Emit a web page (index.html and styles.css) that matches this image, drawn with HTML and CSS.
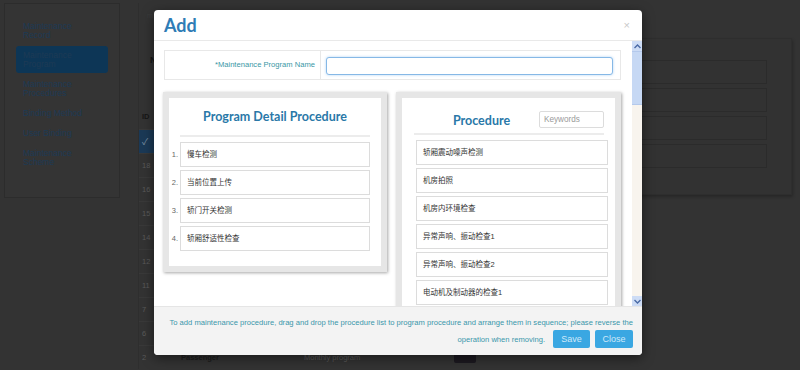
FILE: index.html
```html
<!DOCTYPE html>
<html lang="en">
<head>
<meta charset="UTF-8">
<title>Maintenance Program</title>
<link rel="stylesheet" href="styles.css">
</head>
<body>

<div class="page">

    <aside class="side">
        <div class="side-item">Maintenance<br>Record</div>
        <div class="side-item active">Maintenance<br>Program</div>
        <div class="side-item">Maintenance<br>Procedures</div>
        <div class="side-item">Binding Method</div>
        <div class="side-item">User Binding</div>
        <div class="side-item">Maintenance<br>Scheme</div>
    </aside>

    <main class="main">
        <div class="crumb">m</div>
        <div class="filter">N</div>
        <table class="grid">
            <tr class="head"><th>ID</th><th></th><th></th><th></th></tr>
            <tr class="checked"><td>&#10003;</td><td></td><td></td><td></td></tr>
            <tr><td>18</td><td></td><td></td><td></td></tr>
            <tr><td>16</td><td></td><td></td><td></td></tr>
            <tr><td>15</td><td></td><td></td><td></td></tr>
            <tr><td>14</td><td></td><td></td><td></td></tr>
            <tr><td>12</td><td></td><td></td><td></td></tr>
            <tr><td>11</td><td></td><td></td><td></td></tr>
            <tr><td>7</td><td></td><td></td><td></td></tr>
            <tr><td>6</td><td></td><td></td><td></td></tr>
            <tr><td>2</td><td class="strong">Passenger</td><td>Monthly program</td><td><span class="mini-btn"></span></td></tr>
        </table>
    </main>

    <section class="box">
        <div class="box-row"></div>
        <div class="box-row"></div>
        <div class="box-row"></div>
        <div class="box-row"></div>
    </section>

</div>

<!-- modal -->
<div class="modal">
    <div class="modal-head">
        <span class="modal-title">Add</span>
        <span class="close">&times;</span>
    </div>

    <div class="modal-body">
        <div class="body-main">

            <div class="field">
                <label class="field-label">*Maintenance Program Name</label>
                <div class="field-input"><input type="text"></div>
            </div>

            <div class="panels">
                <div class="panel">
                    <div class="panel-title">Program Detail Procedure</div>
                    <ol class="steps">
                        <li>慢车检测</li>
                        <li>当前位置上传</li>
                        <li>轿门开关检测</li>
                        <li>轿厢舒适性检查</li>
                    </ol>
                </div>

                <div class="panel right">
                    <div class="panel-head">
                        <div class="panel-title">Procedure</div>
                        <input class="search" type="text" placeholder="Keywords">
                    </div>
                    <ul class="steps pool">
                        <li>轿厢震动噪声检测</li>
                        <li>机房拍照</li>
                        <li>机房内环境检查</li>
                        <li>异常声响、振动检查1</li>
                        <li>异常声响、振动检查2</li>
                        <li>电动机及制动器的检查1</li>
                        <li>电动机及制动器的检查2</li>
                    </ul>
                </div>
            </div>

        </div>

        <div class="scroll">
            <div class="scroll-btn">
                <svg width="7" height="5" viewBox="0 0 7 5"><path d="M0.5 4 L3.5 1 L6.5 4" fill="none" stroke="#4a6aa5" stroke-width="1.4"/></svg>
            </div>
            <div class="scroll-thumb"></div>
            <div class="scroll-track"></div>
            <div class="scroll-btn">
                <svg width="7" height="5" viewBox="0 0 7 5"><path d="M0.5 1 L3.5 4 L6.5 1" fill="none" stroke="#4a6aa5" stroke-width="1.4"/></svg>
            </div>
        </div>
    </div>

    <div class="modal-foot">
        <div class="hint">To add maintenance procedure, drag and drop the procedure list to program procedure and arrange them in sequence; please reverse the</div>
        <div class="actions">
            <span class="hint">operation when removing.</span>
            <button class="btn">Save</button>
            <button class="btn">Close</button>
        </div>
    </div>
</div>

</body>
</html>
```

FILE: styles.css
```css
*{
    box-sizing:border-box;
}

body{
    margin:0;
    width:800px;
    height:370px;
    overflow:hidden;
    position:relative;
    background:#333;
    font-family:"Liberation Sans", "Noto Sans CJK SC", sans-serif;
}

/* page behind the overlay */
.page{
    display:flex;
    align-items:flex-start;
    padding:3px 8px 0 4px;
}

.side{
    width:116px;
    padding:13px 0 24px 11px;
    border:1px solid #2c2c2c;
    background:#343434;
}

.side-item{
    width:92px;
    padding:4.5px 7px;
    margin-bottom:2px;
    font-size:8.5px;
    line-height:9px;
    color:#1d3a55;
    border-radius:3px;
}

.side-item.active{
    background:#0d3656;
}

.main{
    width:382px;
    margin-left:18px;
    padding-top:8px;
    border-left:1px solid #2e2e2e;
}

.crumb{
    font-size:7px;
    line-height:10px;
    color:#3c3c3c;
    padding-left:8px;
}

.filter{
    margin-top:34px;
    padding-left:11px;
    font-size:9px;
    line-height:10px;
    font-weight:700;
    color:#161616;
}

.grid{
    margin-top:39px;
    width:100%;
    border-collapse:collapse;
    font-size:7.5px;
    color:#5a5a5a;
}

.grid td,
.grid th{
    height:24px;
    padding:0 0 0 3px;
    text-align:left;
    border-top:1px solid #393939;
}

.grid th{
    height:25px;
    color:#161616;
    border-top:none;
}

.grid td:first-child{ width:32px; }
.grid td:nth-child(2){ width:130px; }
.grid td:nth-child(3){ width:150px; }

.grid .checked td{
    background:#1b3956;
    color:#7a8ea2;
    font-size:9px;
}

.grid .strong{
    color:#1c1c1c;
    font-weight:700;
    padding-left:10px;
}

.mini-btn{
    display:inline-block;
    width:22px;
    height:14px;
    background:#1c1920;
    border-radius:2px;
}

.box{
    width:272px;
    margin-top:35px;
    padding:21px 24px 26px 6px;
    background:#323232;
    border:1px solid #2e2e2e;
    box-shadow:1px 2px 3px rgba(0,0,0,.25);
}

.box-row{
    height:24px;
    margin-bottom:4px;
    border:1px solid #2b2b2b;
}

.box-row:last-child{
    margin-bottom:0;
}

/* modal */
.modal{
    position:absolute;
    left:154px;
    top:10px;
    width:488px;
    height:345px;
    background:#fff;
    border-radius:4px;
    box-shadow:0 3px 12px rgba(0,0,0,.5);
    display:flex;
    flex-direction:column;
    overflow:hidden;
}

.modal-head{
    height:31px;
    flex:none;
    padding:0 12px 0 10px;
    border-bottom:1px solid #e9e9e9;
    display:flex;
    align-items:center;
    justify-content:space-between;
}

.modal-title{
    font-family:Lato, sans-serif;
    font-weight:700;
    font-size:18px;
    color:#2e7cb6;
}

.close{
    font-size:11px;
    color:#c9c9c9;
}

.modal-body{
    flex:1;
    min-height:0;
    display:flex;
}

.body-main{
    flex:1;
    overflow:hidden;
    padding:9px 11px 0 9px;
}

/* name field */
.field{
    height:30px;
    margin-left:1px;
    display:grid;
    grid-template-columns:156px 1fr;
    border:1px solid #e8e8e8;
}

.field-label{
    padding-right:5px;
    text-align:right;
    font-size:7.6px;
    line-height:28px;
    color:#3a97a6;
    border-right:1px solid #e8e8e8;
}

.field-input{
    padding:5px 7px 5px 5px;
}

.field-input input{
    width:100%;
    height:18px;
    border:1px solid #86b8e6;
    border-radius:3px;
    box-shadow:0 0 3px #b4d5f4;
    outline:none;
}

/* two panels */
.panels{
    margin-top:12px;
    display:flex;
    align-items:flex-start;
    gap:9px;
}

.panel{
    width:224px;
    padding:0 11px 15px;
    background:#fff;
    border:6px solid #e6e6e6;
    box-shadow:1px 1px 3px rgba(0,0,0,.35);
}

.panel.right{
    width:225px;
    padding:0 11px 15px 12px;
}

.panel-title{
    padding:11px 0 10px;
    text-align:center;
    font-family:Lato, sans-serif;
    font-weight:700;
    font-size:12.5px;
    line-height:16px;
    color:#2a78a8;
    border-bottom:2px solid #ececec;
}

.panel-head{
    height:37px;
    display:flex;
    align-items:flex-end;
    border-bottom:2px solid #ececec;
}

.panel-head .panel-title{
    flex:1;
    padding:0 0 4px 10px;
    border-bottom:none;
}

.search{
    width:65px;
    height:17px;
    margin-bottom:5px;
    padding:0 4px;
    border:1px solid #dcdcdc;
    border-radius:2px;
    font-family:"Liberation Sans", sans-serif;
    font-size:8.2px;
}

.search::placeholder{
    color:#9a9a9a;
}

.steps{
    margin:5px 0 0;
    padding:0;
    list-style:none;
    counter-reset:step;
}

.steps li{
    position:relative;
    height:25px;
    margin-bottom:3px;
    padding-left:6px;
    border:1px solid #dcdcdc;
    font-size:7.5px;
    line-height:23px;
    color:#333;
}

.steps li:last-child{
    margin-bottom:0;
}

ol.steps li{
    counter-increment:step;
}

/* list number in the panel padding */
ol.steps li::before{
    content:counter(step) ".";
    position:absolute;
    right:100%;
    margin-right:3px;
    color:#666;
}

.pool li{
    margin-left:2px;
    margin-right:-4px;
}

/* scrollbar */
.scroll{
    width:10px;
    flex:none;
    background:#f8f4ee;
    display:flex;
    flex-direction:column;
}

.scroll-btn{
    height:10px;
    display:flex;
    align-items:center;
    justify-content:center;
    background:#cddcf5;
}

.scroll-thumb{
    height:54px;
    background:#c6d8f4;
    border-top:1px solid #b4c9ec;
    border-bottom:1px solid #b4c9ec;
}

.scroll-track{
    flex:1;
}

/* footer */
.modal-foot{
    height:49px;
    flex:none;
    padding:8px 9px 0;
    background:#f3f3f3;
    border-top:1px solid #e5e5e5;
    text-align:right;
    font-size:7.6px;
    line-height:15px;
}

.hint{
    color:#3a97ab;
}

.actions{
    display:flex;
    align-items:center;
    justify-content:flex-end;
    gap:5px;
}

.actions .hint{
    margin-right:3px;
}

.btn{
    width:37px;
    height:18px;
    padding:0;
    border:none;
    border-radius:2px;
    background:#3aa7e2;
    color:#cfe9fa;
    font-family:"Liberation Sans", sans-serif;
    font-size:9px;
}

.btn + .btn{
    width:38px;
}
```
